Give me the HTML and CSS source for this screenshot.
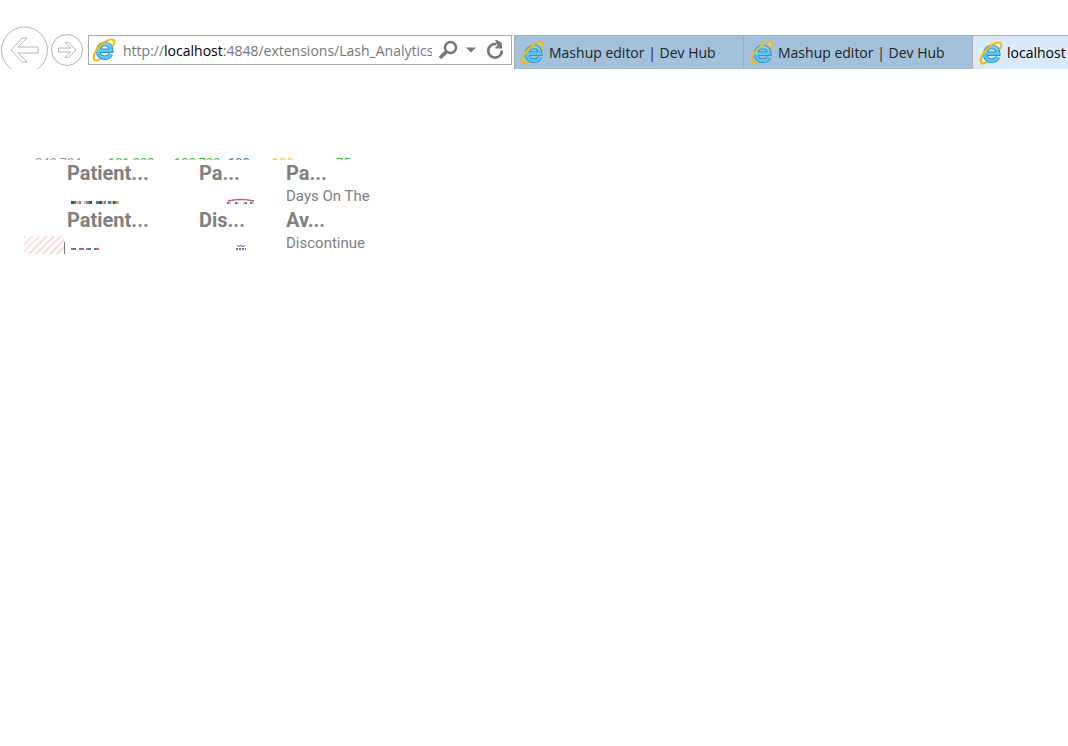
FILE: index.html
```html
<!DOCTYPE html>
<html lang="en">
<head>
<meta charset="utf-8">
<title>localhost</title>
<link rel="stylesheet" href="styles.css">
</head>
<body>
<svg class="defs" aria-hidden="true">
  <defs>
    <symbol id="ie" viewBox="0 0 24 24">
      <path d="M6.500 12.800H19.200C19.200 8.500 16.800 6 12.800 6c-4 0-6.600 3-6.600 7s2.600 6.700 6.600 6.700c3 0 5-1.200 6-3.500" fill="none" stroke="#1c86c8" stroke-width="4.600"/>
      <path d="M6.500 12.800H19.200C19.200 8.500 16.800 6 12.800 6c-4 0-6.600 3-6.600 7s2.600 6.700 6.600 6.700c3 0 5-1.200 6-3.500" fill="none" stroke="#5cc6f2" stroke-width="3"/>
      <path d="M6.500 12C7 8 9.500 5.800 13 5.800c2.500 0 4.500 1 5.400 3" fill="none" stroke="#a5e6fc" stroke-width="1"/>
      <path d="M20.800 8.300C23 4.500 22.800 1.700 19.700 1.500 15.500 1.300 8.500 6 4.600 12c-3.600 5.500-4 10.500-.2 10.500 1.100 0 2.400-.5 3.700-1.300" fill="none" stroke="#f2b90f" stroke-width="2"/>
      <path d="M20.900 5.500C21.500 3 20 2.200 17.800 2.700" fill="none" stroke="#ffe57a" stroke-width=".8"/>
    </symbol>
  </defs>
</svg>
<header class="browser">
  <nav class="history" aria-label="History">
    <button class="nav back" aria-label="Back"><svg viewBox="0 0 48 48"><circle cx="24.500" cy="24" r="23"/><path d="M11 24l11-12h5l-9 9h20v6H18l9 9h-5z"/></svg></button>
    <button class="nav forward" aria-label="Forward"><svg viewBox="0 0 32 32"><circle cx="16" cy="16" r="15.500"/><path d="M25 16l-7.500 7.500H14l5.500-5.500H7.500v-4h12L14 8.500h3.500z"/></svg></button>
  </nav>
  <form class="address">
    <svg class="ie"><use href="#ie"/></svg>
    <a class="url" href="#">http://<span class="host">localhost</span>:4848/extensions/Lash_Analytics</a>
    <button type="button" class="tool" aria-label="Search"><svg width="20" height="20" viewBox="0 0 20 20"><circle cx="12.500" cy="7.500" r="5.500" fill="none" stroke="#777" stroke-width="2.500"/><path d="M8.500 11.500L2 18" stroke="#777" stroke-width="3.500"/></svg></button>
    <button type="button" class="tool drop" aria-label="Show addresses"><svg width="10" height="6" viewBox="0 0 10 6"><path d="M0 .5h10L5 5.500z" fill="#777"/></svg></button>
    <button type="button" class="tool" aria-label="Refresh"><svg width="18" height="20" viewBox="0 0 18 20"><path d="M15.800 10.500A6.800 6.800 0 1 1 10.500 4.200" fill="none" stroke="#777" stroke-width="2.700"/><path d="M9 0h2l5 3v5.500H9.500V7l2-1.500z" fill="#777"/></svg></button>
  </form>
  <nav class="tabs" aria-label="Tabs">
    <a class="tab" href="#"><svg class="ie"><use href="#ie"/></svg>Mashup editor | Dev Hub</a>
    <a class="tab" href="#"><svg class="ie"><use href="#ie"/></svg>Mashup editor | Dev Hub</a>
    <a class="tab active" href="#"><svg class="ie"><use href="#ie"/></svg>localhost</a>
  </nav>
</header>
<main class="page">
  <div class="values">
    <span class="gray">242,704</span><span class="green">101,222</span><span class="green">102,722</span><span class="blue">100</span><span class="yellow">100</span><span class="green">75</span>
  </div>
  <div class="grid">
    <section class="cell"><h2>Patient...</h2>
      <svg class="chart wide" viewBox="0 0 131 20"><g class="dash"><path class="g" d="M4 16.500h3M23 16.500h2M32 16.500h3M46 16.500h2"/><path class="b" d="M7 16.500h2M21 16.500h2M29 16.500h3M41 16.500h3"/><path class="y" d="M9 16.500h3M17 16.500h2M35 16.500h2M44 16.500h2M50 16.500h2"/><path class="r" d="M12 16.500h2M19 16.500h2M37 16.500h2M48 16.500h2"/></g></svg>
    </section>
    <section class="cell"><h2>Pa...</h2>
      <svg class="chart" viewBox="0 0 87 20"><g class="dash thin"><path class="y" d="M30 17h2M38 17h2M44 17h2M53 17h2"/><path class="b" d="M28 17h2M36 17h2M46 17h2M51 17h2"/></g><path d="M29 15q13-3 26 0" fill="none" stroke="#d05068" stroke-width="1.500"/></svg>
    </section>
    <section class="cell"><h2>Pa...</h2><p>Days On The</p></section>
    <section class="cell"><span class="hatch"></span><h2>Patient...</h2>
      <svg class="chart wide" viewBox="0 0 131 20"><g class="dash thin"><path class="b" d="M6 16h3M12 16h3M21 16h3M27 16h2"/><path class="r" d="M4 16h2M15 16h2M19 16h2M29 16h3"/></g></svg>
    </section>
    <section class="cell"><h2>Dis...</h2>
      <svg class="chart" viewBox="0 0 87 20"><path d="M38 12.500l2 1 2-1 2 1 2-1" fill="none" stroke="#dc3048"/><path class="dash thin b" d="M37 16h2M40 16h2M43 16h2M46 16h1"/></svg>
    </section>
    <section class="cell"><h2>Av...</h2><p>Discontinue</p></section>
  </div>
</main>
</body>
</html>
```
FILE: styles.css
```css
* { box-sizing: border-box; }
body { margin: 0; background: #fff; font-family: "Open Sans", "Noto Sans", sans-serif; }
.defs { position: absolute; width: 0; height: 0; }
button { border: 0; padding: 0; background: none; display: flex; }
.browser { display: flex; align-items: flex-start; height: 69px; padding-top: 26px; overflow: hidden; }
.history { display: flex; width: 88px; gap: 3px; }
.nav svg { fill: none; stroke: #b4b4b4; }
.back svg { width: 48px; height: 48px; }
.forward { padding-top: 8px; }
.forward svg { width: 32px; height: 32px; }
.address { display: flex; align-items: center; width: 424px; height: 30px; margin: 9px 2px 0 0; padding: 0 6px 0 3px; border: 1px solid #ababab; flex: none; }
.ie { width: 24px; height: 24px; flex: none; }
.url { width: 309px; margin: 0 6px 0 7px; padding-top: 2px; overflow: hidden; white-space: nowrap; color: #777; font-size: 14px; line-height: 24px; text-decoration: none; }
.host { color: #000; }
.drop { margin: 0 10px 0 8px; }
.tabs { display: flex; flex: 1; min-width: 0; margin-top: 9px; height: 34px; overflow: hidden; }
.tab { display: flex; align-items: center; flex: none; gap: 4px; width: 229px; padding-left: 6px; border: 1px solid #ababab; border-width: 1px 0 0 1px; background: #a3c1db; color: #222; font-size: 14px; white-space: nowrap; text-decoration: none; }
.active { background: #d9ebfb; color: #000; }
.page { padding: 88px 0 0 24px; font-family: Roboto, sans-serif; }
.values { display: flex; height: 3px; overflow: hidden; padding-left: 11px; font-size: 13px; line-height: 18px; }
.values span { width: 66px; margin-top: -3px; flex: none; }
.values .green:nth-child(2) { margin-left: 7px; }
.values .green:nth-child(3) { width: 54px; }
.values .blue { width: 44px; }
.values .yellow { width: 64px; }
.gray { color: #999; }
.green { color: #3cc43c; }
.blue { color: #3c78b4; }
.yellow { color: #f6c90e; }
.grid { display: grid; grid-template-columns: 132px 87px 120px; grid-auto-rows: 47px; margin-left: 43px; }
.cell { position: relative; }
.cell h2 { margin: 0; color: #808080; font-size: 20px; line-height: 26px; }
.cell p { margin: 0; padding-top: 1px; color: #808080; font-size: 15px; line-height: 18px; }
.chart { display: block; width: 87px; height: 20px; }
.wide { width: 131px; }
.dash { stroke-width: 3px; }
.thin { stroke-width: 2px; }
.g { stroke: #17703f; }
.b { stroke: #4080bd; }
.y { stroke: #e2c46c; }
.r { stroke: #d96378; }
.hatch { position: absolute; left: -43px; top: 29px; width: 40px; height: 18px; background: repeating-linear-gradient(135deg, #fcdcdc 0 2px, #fff 2px 5px); }
.hatch::after { content: ""; position: absolute; left: 40px; bottom: 0; width: 1px; height: 12px; background: #777; }
```
